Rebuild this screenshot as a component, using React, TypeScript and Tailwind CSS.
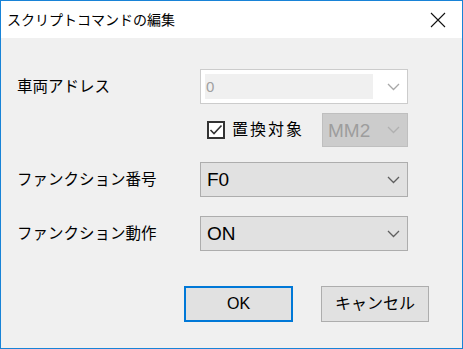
import React from "react";

const FONT = { fontFamily: '"Liberation Sans", "Noto Sans CJK JP", sans-serif' };

function Chevron({ color }: { color: string }) {
  return (
    <svg width="13" height="8" viewBox="0 0 13 8" className="shrink-0">
      <polyline points="1,1 6.5,6.5 12,1" fill="none" stroke={color} strokeWidth="1.3" />
    </svg>
  );
}

function Combo({ value }: { value: string }) {
  return (
    <div className="w-[208px] h-[35px] border border-[#adadad] bg-[#e1e1e1] flex items-center pl-[6px] pr-[7px]">
      <span className="flex-1 text-[19px] leading-none text-black">{value}</span>
      <Chevron color="#5f5f5f" />
    </div>
  );
}

export default function App() {
  return (
    <div
      className="w-[463px] h-[349px] border border-[#1883d7] flex flex-col bg-[#f0f0f0] overflow-hidden"
      style={FONT}
    >
      <div className="h-[37px] bg-white flex items-center justify-between pl-[6px] pr-[16px] shrink-0">
        <span className="text-[14px] text-black leading-none">スクリプトコマンドの編集</span>
        <svg width="16" height="16" viewBox="0 0 16 16">
          <path d="M1 1 L15 15 M15 1 L1 15" stroke="#111" strokeWidth="1.1" fill="none" />
        </svg>
      </div>

      <div className="flex flex-col pt-[31px] pl-[16px]">
        <div className="flex items-center">
          <div className="w-[183px] text-[15.5px] text-black leading-none">車両アドレス</div>
          <div className="w-[208px] h-[35px] border border-[#cccccc] bg-white flex items-center p-[4px] pr-[7px]">
            <div className="flex-1 h-full bg-[#f0f0f0] flex items-center pl-[1px] mr-[14px]">
              <span className="text-[15px] leading-none text-[#a0a0a0]">0</span>
            </div>
            <Chevron color="#a8a8a8" />
          </div>
        </div>

        <div className="flex items-center mt-[9px]">
          <div className="w-[183px]" />
          <div className="w-[208px] flex items-center justify-between">
            <div className="flex items-center pl-[7px]">
              <div className="w-[18px] h-[18px] border-2 border-[#333333] bg-white flex items-center justify-center">
                <svg width="14" height="12" viewBox="0 0 14 12">
                  <polyline points="1.5,6 5,9.5 12.5,1.5" fill="none" stroke="#333" strokeWidth="1.6" />
                </svg>
              </div>
              <span className="ml-[7px] text-[16px] tracking-[2px] text-black leading-none">置換対象</span>
            </div>
            <div className="w-[86px] h-[34px] border border-[#bfbfbf] bg-[#cccccc] flex items-center pl-[5px] pr-[7px]">
              <span className="flex-1 text-[19px] leading-none text-[#9d9d9d]">MM2</span>
              <Chevron color="#b0b0b0" />
            </div>
          </div>
        </div>

        <div className="flex items-center mt-[15px]">
          <div className="w-[183px] text-[15.5px] text-black leading-none">ファンクション番号</div>
          <Combo value="F0" />
        </div>

        <div className="flex items-center mt-[19px]">
          <div className="w-[183px] text-[15.5px] text-black leading-none">ファンクション動作</div>
          <Combo value="ON" />
        </div>

        <div className="flex items-center mt-[35px] pl-[167px] gap-[28px]">
          <button className="w-[109px] h-[36px] border-2 border-[#0078d7] bg-[#e1e1e1] text-[16px] text-black leading-none flex items-center justify-center">
            OK
          </button>
          <button className="w-[108px] h-[36px] border border-[#adadad] bg-[#e1e1e1] text-[16px] text-black leading-none flex items-center justify-center">
            キャンセル
          </button>
        </div>
      </div>
    </div>
  );
}
